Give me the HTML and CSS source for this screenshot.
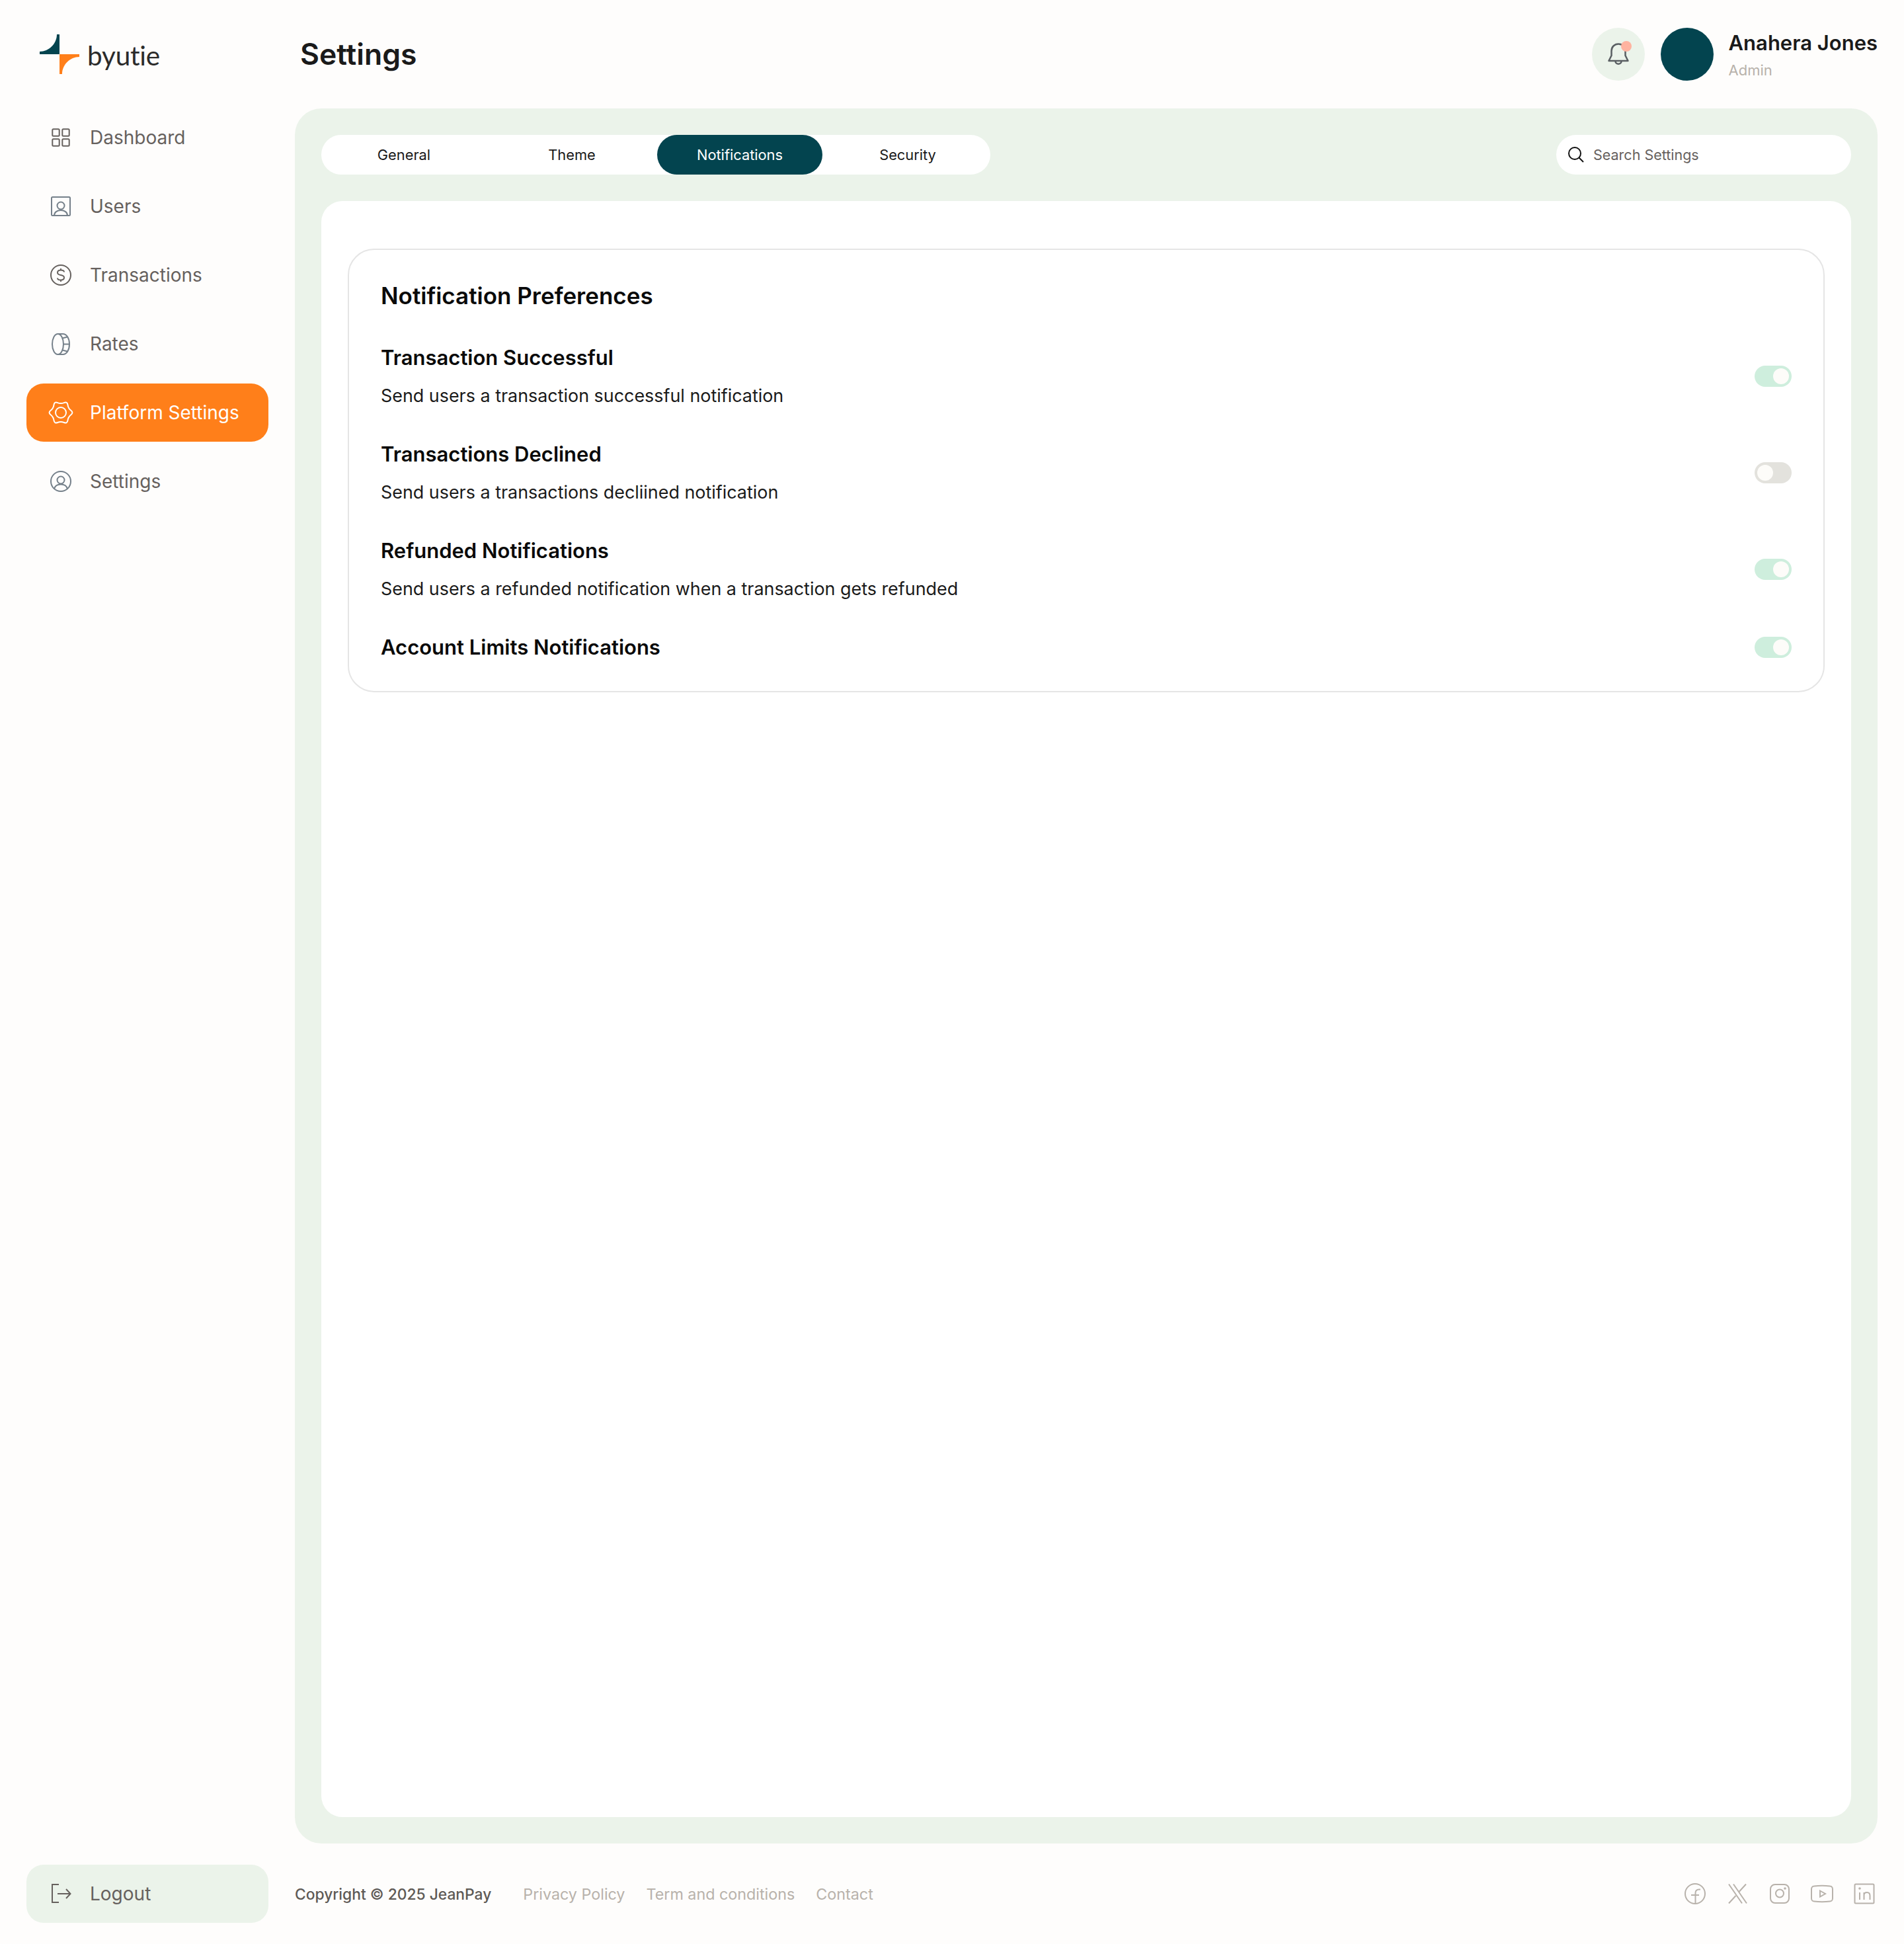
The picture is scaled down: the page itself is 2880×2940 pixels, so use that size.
FILE: index.html
```html
<!DOCTYPE html>
<html lang="en">
<head>
  <meta charset="UTF-8">
  <meta name="viewport" content="width=device-width, initial-scale=1.0">
  <title>Settings</title>
  <link rel="stylesheet" href="styles.css">
</head>
<body>

  <div class="app">

    <div class="brand">
      <svg class="brand-mark" viewBox="0 0 60 60">
        <path fill="#03444f" d="M26 0H30V30H0V26C14 26 26 14 26 0Z"/>
        <path fill="#ff7f1a" d="M30 30H60V34C46 34 34 46 34 60H30Z"/>
      </svg>
      <span class="brand-name">byutie</span>
    </div>

    <header class="topbar">
      <h1 class="page-title">Settings</h1>
      <div class="bell">
        <svg class="icon" viewBox="0 0 40 40">
          <path d="M9.5 22V15C9.5 9 14 4.5 20 4.5C26 4.5 30.5 9 30.5 15V22L34.5 30H5.5Z" stroke="#5a5f63" stroke-width="2.5" stroke-linejoin="round"/>
          <path d="M15.5 30.5C15.5 36 24.5 36 24.5 30.5" stroke="#5a5f63" stroke-width="2.5"/>
        </svg>
        <span class="bell-dot"></span>
      </div>
      <div class="avatar"></div>
      <div class="user">
        <div class="user-name">Anahera Jones</div>
        <div class="user-role">Admin</div>
      </div>
    </header>

    <nav class="menu">
      <a class="menu-item">
        <svg class="icon" viewBox="0 0 40 40" stroke="#66615e">
          <rect x="7.3" y="7.3" width="10.4" height="10.4" rx="1.5"/>
          <rect x="22.3" y="7.3" width="10.4" height="10.4" rx="1.5"/>
          <rect x="7.3" y="22.3" width="10.4" height="10.4" rx="1.5"/>
          <rect x="22.3" y="22.3" width="10.4" height="10.4" rx="1.5"/>
        </svg>
        Dashboard
      </a>
      <a class="menu-item">
        <svg class="icon" viewBox="0 0 40 40" stroke="#75808a">
          <rect x="6" y="6" width="28" height="28" rx="1.5"/>
          <circle cx="20" cy="19" r="5.5"/>
          <path d="M10 34C10 29 14.5 26 20 26C25.5 26 30 29 30 34"/>
        </svg>
        Users
      </a>
      <a class="menu-item">
        <svg class="icon" viewBox="0 0 40 40" stroke="#66615e">
          <circle cx="20" cy="20" r="15"/>
          <path d="M25 15.5C25 13.5 23 12.5 20 12.5C17 12.5 15 14 15 16.2C15 18.5 17 19.5 20 20C23 20.5 25 21.5 25 23.8C25 26 23 27.5 20 27.5C17 27.5 15 26.5 15 24.5M20 10V12.5M20 27.5V30"/>
        </svg>
        Transactions
      </a>
      <a class="menu-item">
        <svg class="icon" viewBox="0 0 40 40" stroke="#75808a">
          <ellipse cx="15.5" cy="20.5" rx="8.5" ry="15.5"/>
          <path d="M15.5 5H23C29 5 33 12 33 20.5C33 29 29 36 23 36H15.5M24 20.5H33M22.5 11.5L30 9.5M22.5 29.5L30 31.5"/>
        </svg>
        Rates
      </a>
      <a class="menu-item active">
        <svg class="icon" viewBox="0 0 40 40" stroke="#fff">
          <path d="M24.88 5.06Q29.75 3.11 30.5 8.31Q31.26 13.5 35.38 16.75Q39.5 20 35.38 23.25Q31.26 26.5 30.5 31.7Q29.75 36.89 24.88 34.95Q20 33 15.12 34.95Q10.25 36.89 9.5 31.7Q8.74 26.5 4.62 23.25Q.5 20 4.62 16.75Q8.74 13.5 9.5 8.31Q10.25 3.11 15.12 5.06Q20 7 24.88 5.06Z"/>
          <circle cx="20" cy="20" r="8"/>
        </svg>
        Platform Settings
      </a>
      <a class="menu-item">
        <svg class="icon" viewBox="0 0 40 40" stroke="#75808a">
          <circle cx="20" cy="20" r="15"/>
          <circle cx="20" cy="18" r="5.5"/>
          <path d="M10 31.5C11 27 15 24.5 20 24.5C25 24.5 29 27 30 31.5"/>
        </svg>
        Settings
      </a>
    </nav>

    <main class="panel">
      <div class="toolbar">
        <div class="tabs">
          <a class="tab">General</a>
          <a class="tab">Theme</a>
          <a class="tab active">Notifications</a>
          <a class="tab">Security</a>
        </div>
        <div class="search">
          <svg class="search-icon" viewBox="0 0 28 28" stroke="#111">
            <circle cx="12" cy="12" r="9"/>
            <path d="M18.5 18.5L25 25"/>
          </svg>
          <span>Search Settings</span>
        </div>
      </div>

      <section class="sheet">
        <div class="prefs">
          <h2 class="prefs-title">Notification Preferences</h2>
          <div class="pref-list">
            <div class="pref">
              <div>
                <h3 class="pref-name">Transaction Successful</h3>
                <p class="pref-desc">Send users a transaction successful notification</p>
              </div>
              <span class="toggle on"><span class="knob"></span></span>
            </div>
            <div class="pref">
              <div>
                <h3 class="pref-name">Transactions Declined</h3>
                <p class="pref-desc">Send users a transactions decliined notification</p>
              </div>
              <span class="toggle"><span class="knob"></span></span>
            </div>
            <div class="pref">
              <div>
                <h3 class="pref-name">Refunded Notifications</h3>
                <p class="pref-desc">Send users a refunded notification when a transaction gets refunded</p>
              </div>
              <span class="toggle on"><span class="knob"></span></span>
            </div>
            <div class="pref">
              <h3 class="pref-name">Account Limits Notifications</h3>
              <span class="toggle on"><span class="knob"></span></span>
            </div>
          </div>
        </div>
      </section>
    </main>

    <div class="logout-cell">
      <a class="menu-item logout">
        <svg class="icon" viewBox="0 0 40 40" stroke="#66615e">
          <path d="M17 6H7V33H17"/>
          <path d="M15 20H34M28 13L34.5 20L28 27"/>
        </svg>
        Logout
      </a>
    </div>

    <footer class="footer">
      <span class="copyright">Copyright © 2025 JeanPay</span>
      <div class="footer-links">
        <a>Privacy Policy</a>
        <a>Term and conditions</a>
        <a>Contact</a>
      </div>
      <div class="socials">
        <svg class="icon" viewBox="0 0 40 40" stroke="#b8b2ab">
          <circle cx="20" cy="20" r="15"/>
          <path d="M28 13.5H26C22 13.5 20.5 15.5 20.5 19V35M14 22H26"/>
        </svg>
        <svg class="icon" viewBox="0 0 40 40" stroke="#b8b2ab">
          <path d="M7 5.5L27 34.5M14 5.5L34 34.5M33 5.5L22.5 17M7 34.5L17.5 23"/>
        </svg>
        <svg class="icon" viewBox="0 0 40 40" stroke="#b8b2ab">
          <rect x="6" y="6" width="28" height="28" rx="7"/>
          <circle cx="20" cy="19.5" r="6"/>
          <circle cx="28" cy="12" r="0.8"/>
        </svg>
        <svg class="icon" viewBox="0 0 40 40" stroke="#b8b2ab">
          <path d="M4 13C4 10 6 8.5 8 8.5C16 7.5 24 7.5 32 8.5C34 8.5 36 10 36 13V27C36 30 34 31.5 32 31.5C24 32.5 16 32.5 8 31.5C6 31.5 4 30 4 27Z"/>
          <path d="M17 15.5L25 20L17 24.5Z"/>
        </svg>
        <svg class="icon" viewBox="0 0 40 40" stroke="#b8b2ab">
          <rect x="5.5" y="5.5" width="29" height="29" rx="1.5"/>
          <circle cx="13" cy="12" r="0.8"/>
          <path d="M13 18V29M19.5 29V18M19.5 22C19.5 19 21 18 24 18C27 18 28.5 20 28.5 23V29"/>
        </svg>
      </div>
    </footer>

  </div>

</body>
</html>
```
FILE: styles.css
```css
* {
  box-sizing: border-box;
}

body {
  margin: 0;
  font-family: Inter, "Liberation Sans", sans-serif;
  background-color: #fefdfc;
  color: #1a1a1a;
}

h1, h2, h3, p {
  margin: 0;
}

.app {
  display: grid;
  grid-template-columns: 366px 1fr;
  grid-template-rows: 164px 2624px 152px;
  column-gap: 40px;
  padding: 0 40px;
  height: 2940px;
}

.icon {
  width: 40px;
  height: 40px;
  flex-shrink: 0;
  fill: none;
  stroke-width: 2;
}

/* brand */
.brand {
  display: flex;
  align-items: center;
  gap: 12px;
  padding-left: 20px;
}

.brand-mark {
  width: 60px;
  height: 60px;
}

.brand-name {
  margin-top: 2px;
  font-family: Lato, sans-serif;
  font-size: 40.5px;
  color: #2b2b2b;
  letter-spacing: -0.2px;
}

/* top bar */
.topbar {
  display: flex;
  align-items: center;
}

.page-title {
  font-size: 44.5px;
  font-weight: 600;
  padding-left: 8px;
  margin-right: auto;
}

.bell {
  position: relative;
  display: flex;
  align-items: center;
  justify-content: center;
  width: 80px;
  height: 80px;
  border-radius: 50%;
  background-color: #ebf3ea;
}

.bell-dot {
  position: absolute;
  left: 44px;
  top: 20px;
  width: 16px;
  height: 16px;
  border-radius: 50%;
  background-color: #ffb3a0;
}

.avatar {
  width: 80px;
  height: 80px;
  margin-left: 24px;
  border-radius: 50%;
  background-color: #03444f;
}

.user {
  margin-left: 23px;
}

.user-name {
  font-size: 31px;
  font-weight: 600;
  line-height: 44px;
}

.user-role {
  margin-top: 3px;
  font-size: 22px;
  line-height: 32px;
  color: #b8b2ab;
}

/* sidebar */
.menu {
  display: flex;
  flex-direction: column;
  gap: 16px;
}

.menu-item {
  display: flex;
  align-items: center;
  gap: 24px;
  height: 88px;
  padding-left: 32px;
  border-radius: 26px;
  font-size: 28px;
  color: #66615e;
}

.menu-item.active {
  background-color: #ff7f1a;
  color: #fff;
}

.logout-cell {
  padding-top: 32px;
}

.logout {
  background-color: #ebf3ea;
}

/* main panel */
.panel {
  display: flex;
  flex-direction: column;
  gap: 40px;
  padding: 40px;
  border-radius: 40px;
  background-color: #ebf3ea;
}

.toolbar {
  display: flex;
  justify-content: space-between;
}

.tabs {
  display: flex;
  gap: 4px;
  height: 60px;
  border-radius: 30px;
  background-color: #fff;
}

.tab {
  display: flex;
  align-items: center;
  justify-content: center;
  width: 250px;
  border-radius: 30px;
  font-size: 21.8px;
  color: #1a1a1a;
}

.tab.active {
  background-color: #03444f;
  color: #fff;
}

.search {
  display: flex;
  align-items: center;
  gap: 12px;
  width: 446px;
  height: 60px;
  padding-left: 16px;
  border-radius: 30px;
  background-color: #fff;
  font-size: 21.5px;
  color: #66615e;
}

.search-icon {
  width: 28px;
  height: 28px;
  fill: none;
  stroke-width: 2;
}

.sheet {
  flex: 1;
  padding: 72px 40px 0;
  border-radius: 32px;
  background-color: #fff;
}

.prefs {
  padding: 48px 48px 44px 48px;
  border: 2px solid #e5e5e5;
  border-radius: 40px;
}

.prefs-title {
  font-size: 35px;
  font-weight: 600;
  line-height: 42px;
  color: #0a0a0a;
}

.pref-list {
  display: flex;
  flex-direction: column;
  gap: 47px;
  margin-top: 51px;
}

.pref {
  display: flex;
  align-items: center;
  justify-content: space-between;
}

.pref-name {
  font-size: 31px;
  font-weight: 600;
  line-height: 44px;
  color: #0a0a0a;
}

.pref-desc {
  margin-top: 15px;
  font-size: 26.9px;
  line-height: 40px;
  color: #1a1a1a;
}

.toggle {
  display: flex;
  width: 56px;
  height: 32px;
  padding: 4px;
  border-radius: 16px;
  background-color: #e3e2dd;
}

.toggle.on {
  justify-content: flex-end;
  background-color: #ceeedd;
}

.knob {
  width: 24px;
  height: 24px;
  border-radius: 50%;
  background-color: #fdfcf9;
}

/* footer */
.footer {
  display: flex;
  align-items: center;
  height: 88px;
  margin-top: 32px;
  font-size: 22.8px;
}

.copyright {
  font-weight: 500;
  color: #5e5a56;
}

.footer-links {
  display: flex;
  gap: 32px;
  margin-left: 48px;
  font-size: 23.3px;
  color: #b8b2ab;
}

.socials {
  display: flex;
  gap: 24px;
  margin-left: auto;
}
```
